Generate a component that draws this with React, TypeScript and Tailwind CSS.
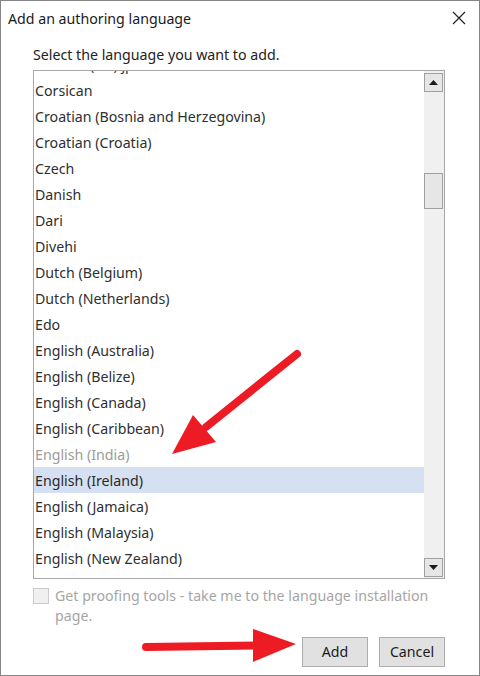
import React from "react";

const items: { label: string; muted?: boolean; selected?: boolean }[] = [
  { label: "Cornish (UK) jp" },
  { label: "Corsican" },
  { label: "Croatian (Bosnia and Herzegovina)" },
  { label: "Croatian (Croatia)" },
  { label: "Czech" },
  { label: "Danish" },
  { label: "Dari" },
  { label: "Divehi" },
  { label: "Dutch (Belgium)" },
  { label: "Dutch (Netherlands)" },
  { label: "Edo" },
  { label: "English (Australia)" },
  { label: "English (Belize)" },
  { label: "English (Canada)" },
  { label: "English (Caribbean)" },
  { label: "English (India)", muted: true },
  { label: "English (Ireland)", selected: true },
  { label: "English (Jamaica)" },
  { label: "English (Malaysia)" },
  { label: "English (New Zealand)" },
  { label: "English (Philippines)" },
];

export default function App() {
  return (
    <div
      className="relative w-[480px] h-[676px] bg-white border border-[#858585] flex flex-col overflow-hidden"
      style={{ fontFamily: '"Noto Sans", "Open Sans", sans-serif' }}
    >
      {/* Title bar */}
      <div className="flex items-start justify-between pl-[7px] pr-[13px] pt-[8px]">
        <span className="text-[14.2px] leading-[20px] text-[#1b1b1b]">Add an authoring language</span>
        <svg width="14" height="14" viewBox="0 0 14 14" className="mt-[2px]">
          <path d="M1 1 L13 13 M13 1 L1 13" stroke="#222" strokeWidth="1.2" fill="none" />
        </svg>
      </div>

      <div className="flex flex-col pl-[32px] pr-[34px]">
        <div className="mt-[16px] text-[14.2px] leading-[20px] text-[#222]">
          Select the language you want to add.
        </div>

        {/* List box */}
        <div className="mt-[5px] h-[509px] border border-[#a7a7a7] flex overflow-hidden">
          <div className="flex-1 overflow-hidden">
            <div className="-mt-[20px] flex flex-col">
              {items.map((it) => (
                <div
                  key={it.label}
                  className={
                    "h-[26px] pt-[1px] leading-[25px] pl-[1px] text-[14.2px] whitespace-nowrap " +
                    (it.selected
                      ? "bg-[#d5e0f2] text-[#2a2a2a]"
                      : it.muted
                      ? "text-[#9b9b9b]"
                      : "text-[#2f2f2f]")
                  }
                >
                  {it.label}
                </div>
              ))}
            </div>
          </div>
          {/* Scrollbar */}
          <div className="w-[20px] bg-[#f0f0f0] flex flex-col items-start">
            <div className="mt-[2px] w-[19px] h-[19px] border border-[#a0a0a0] bg-[#e6e6e6] flex items-center justify-center">
              <svg width="9" height="5" viewBox="0 0 9 5">
                <path d="M4.5 0 L9 5 L0 5 Z" fill="#1a1a1a" />
              </svg>
            </div>
            <div className="mt-[81px] w-[19px] h-[36px] border border-[#a0a0a0] bg-[#e6e6e6]" />
            <div className="flex-1" />
            <div className="mb-[1px] w-[19px] h-[19px] border border-[#a0a0a0] bg-[#e6e6e6] flex items-center justify-center">
              <svg width="9" height="5" viewBox="0 0 9 5">
                <path d="M0 0 L9 0 L4.5 5 Z" fill="#1a1a1a" />
              </svg>
            </div>
          </div>
        </div>

        {/* Checkbox row */}
        <div className="mt-[7px] flex items-start gap-[6px]">
          <div className="mt-[2px] w-[16px] h-[16px] shrink-0 border border-[#cccccc] bg-[#f0f0f0]" />
          <div className="text-[14.2px] leading-[20px] text-[#a6a6a6]">
            Get proofing tools - take me to the language installation page.
          </div>
        </div>

        {/* Buttons */}
        <div className="mt-[11px] flex justify-end gap-[11px]">
          <button className="w-[66px] h-[30px] border border-[#adadad] bg-[#e1e1e1] text-[14.2px] text-[#1b1b1b] leading-none">
            Add
          </button>
          <button className="w-[66px] h-[30px] border border-[#adadad] bg-[#e1e1e1] text-[14.2px] text-[#1b1b1b] leading-none">
            Cancel
          </button>
        </div>
      </div>

      {/* Red annotation arrows */}
      <svg
        className="absolute left-[-1px] top-[-1px] pointer-events-none"
        width="480"
        height="676"
        viewBox="0 0 480 676"
      >
        <line x1="297" y1="354" x2="206" y2="427" stroke="#ed1c24" strokeWidth="8" strokeLinecap="round" />
        <polygon points="172,454 193,415 216,442" fill="#ed1c24" />
        <line x1="146" y1="647" x2="262" y2="645.5" stroke="#ed1c24" strokeWidth="8" strokeLinecap="round" />
        <polygon points="296,644 253,629 253,662" fill="#ed1c24" />
      </svg>
    </div>
  );
}
